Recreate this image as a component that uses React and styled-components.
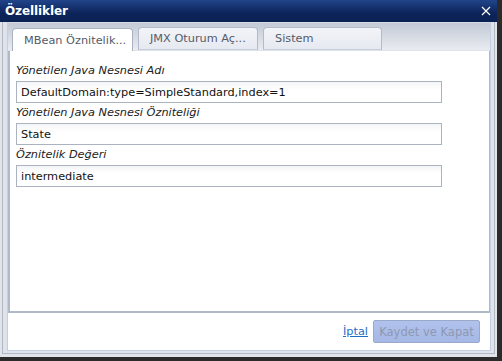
import React, { useState } from 'react';
import styled, { createGlobalStyle } from 'styled-components';

const GlobalStyle = createGlobalStyle`
  html, body {
    margin: 0;
    padding: 0;
    background: #2b2b2b;
    font-family: 'DejaVu Sans', Verdana, sans-serif;
  }
`;

const Window = styled.div`
  width: 497px;
  height: 357px;
  display: flex;
  flex-direction: column;
  background: #e1e5eb;
`;

const TitleBar = styled.div`
  height: 22px;
  flex: none;
  display: flex;
  align-items: center;
  justify-content: space-between;
  padding: 0 6px 0 5px;
  background: linear-gradient(#21448a, #0c2459 60%, #0a2153);
  box-sizing: border-box;
`;

const Title = styled.span`
  color: #fff;
  font-weight: bold;
  font-size: 12px;
  letter-spacing: -0.1px;
`;

const CloseButton = styled.button`
  width: 11px;
  height: 11px;
  padding: 0;
  border: none;
  background: none;
  display: flex;
  align-items: center;
  justify-content: center;
  cursor: pointer;
`;

const Body = styled.div`
  flex: 1;
  display: flex;
  padding: 0 2px 3px 2px;
  min-height: 0;
`;

const Frame = styled.div`
  flex: 1;
  display: flex;
  border: 1px solid #b3b8c1;
  border-top: none;
  background: #dfe4ec;
  padding: 0 3px 2px 4px;
`;

const Inner = styled.div`
  flex: 1;
  display: flex;
  flex-direction: column;
  background: #fff;
  border: 1px solid #c3cfe1;
  border-top: none;
`;

const TabStrip = styled.div`
  height: 29px;
  flex: none;
  display: flex;
  align-items: flex-end;
  gap: 5px;
  padding: 0 0 0 4px;
  box-sizing: border-box;
  background: linear-gradient(#c3cad6, #dde1e8 70%, #e9ecf1);
  border-top: 1px solid #d6dbe3;
  border-bottom: 1px solid #dde2ea;
`;

const Tab = styled.button`
  width: ${p => p.$w}px;
  height: 23px;
  margin-bottom: ${p => (p.$active ? '-1px' : '0')};
  box-sizing: border-box;
  border: 1px solid ${p => (p.$active ? '#a8b2c3' : '#b2bbca')};
  border-bottom: ${p => (p.$active ? 'none' : '1px solid #c9d0dc')};
  border-radius: 4px 4px 0 0;
  background: ${p => (p.$active ? '#fff' : 'linear-gradient(#f2f4f8, #e6e9f0)')};
  color: #545b6a;
  font-family: 'DejaVu Sans', Verdana, sans-serif;
  font-size: 11.3px;
  text-align: left;
  padding: 0 0 0 11px;
  white-space: nowrap;
  overflow: hidden;
  cursor: pointer;
`;

const Panel = styled.div`
  flex: 1;
  display: flex;
  flex-direction: column;
  padding: 10px 0 0 6px;
  border-left: 2px solid #b0b9c8;
  border-right: 1px solid #b0b9c8;
  border-bottom: 2px solid #b0b9c8;
`;

const Label = styled.label`
  height: 20px;
  line-height: 20px;
  font-size: 11.3px;
  font-style: italic;
  color: #222;
`;

const Input = styled.input`
  width: 426px;
  height: 22px;
  box-sizing: border-box;
  border: 1px solid #abb3c1;
  background: linear-gradient(#f4f5f7, #fff 40%);
  padding: 0 0 0 4px;
  font-family: 'DejaVu Sans', Verdana, sans-serif;
  font-size: 11.3px;
  color: #111;
  outline: none;
`;

const Footer = styled.div`
  height: 37px;
  flex: none;
  display: flex;
  align-items: center;
  justify-content: flex-end;
  gap: 5px;
  padding: 0 10px 0 0;
`;

const CancelLink = styled.a`
  color: #1f6dc6;
  font-size: 11.3px;
  text-decoration: underline;
  cursor: pointer;
`;

const SaveButton = styled.button`
  width: 107px;
  height: 23px;
  box-sizing: border-box;
  border: 1px solid #9aa9ca;
  border-radius: 2px;
  background: linear-gradient(#b0c2ec, #a5b8e6);
  color: #8e98b0;
  font-family: 'DejaVu Sans', Verdana, sans-serif;
  font-size: 11.5px;
  padding: 0;
`;

const tabs = [
  { id: 'mbean', label: 'MBean Öznitelik...', w: 121 },
  { id: 'jmx', label: 'JMX Oturum Aç...', w: 120 },
  { id: 'sys', label: 'Sistem', w: 119 },
];

const fields = [
  { label: 'Yönetilen Java Nesnesi Adı', value: 'DefaultDomain:type=SimpleStandard,index=1' },
  { label: 'Yönetilen Java Nesnesi Özniteliği', value: 'State' },
  { label: 'Öznitelik Değeri', value: 'intermediate' },
];

const App = () => {
  const [active, setActive] = useState('mbean');

  return (
    <>
      <GlobalStyle />
      <Window>
        <TitleBar>
          <Title>Özellikler</Title>
          <CloseButton aria-label="Kapat">
            <svg width="10" height="10" viewBox="0 0 10 10">
              <path d="M1 1 L9 9 M9 1 L1 9" stroke="#fff" strokeWidth="1.2" fill="none" />
            </svg>
          </CloseButton>
        </TitleBar>
        <Body>
          <Frame>
            <Inner>
              <TabStrip>
                {tabs.map(t => (
                  <Tab
                    key={t.id}
                    $w={t.w}
                    $active={active === t.id}
                    onClick={() => setActive(t.id)}
                  >
                    {t.label}
                  </Tab>
                ))}
              </TabStrip>
              <Panel>
                {fields.map(f => (
                  <React.Fragment key={f.label}>
                    <Label>{f.label}</Label>
                    <Input defaultValue={f.value} />
                  </React.Fragment>
                ))}
              </Panel>
              <Footer>
                <CancelLink>İptal</CancelLink>
                <SaveButton disabled>Kaydet ve Kapat</SaveButton>
              </Footer>
            </Inner>
          </Frame>
        </Body>
      </Window>
    </>
  );
};

export default App;
